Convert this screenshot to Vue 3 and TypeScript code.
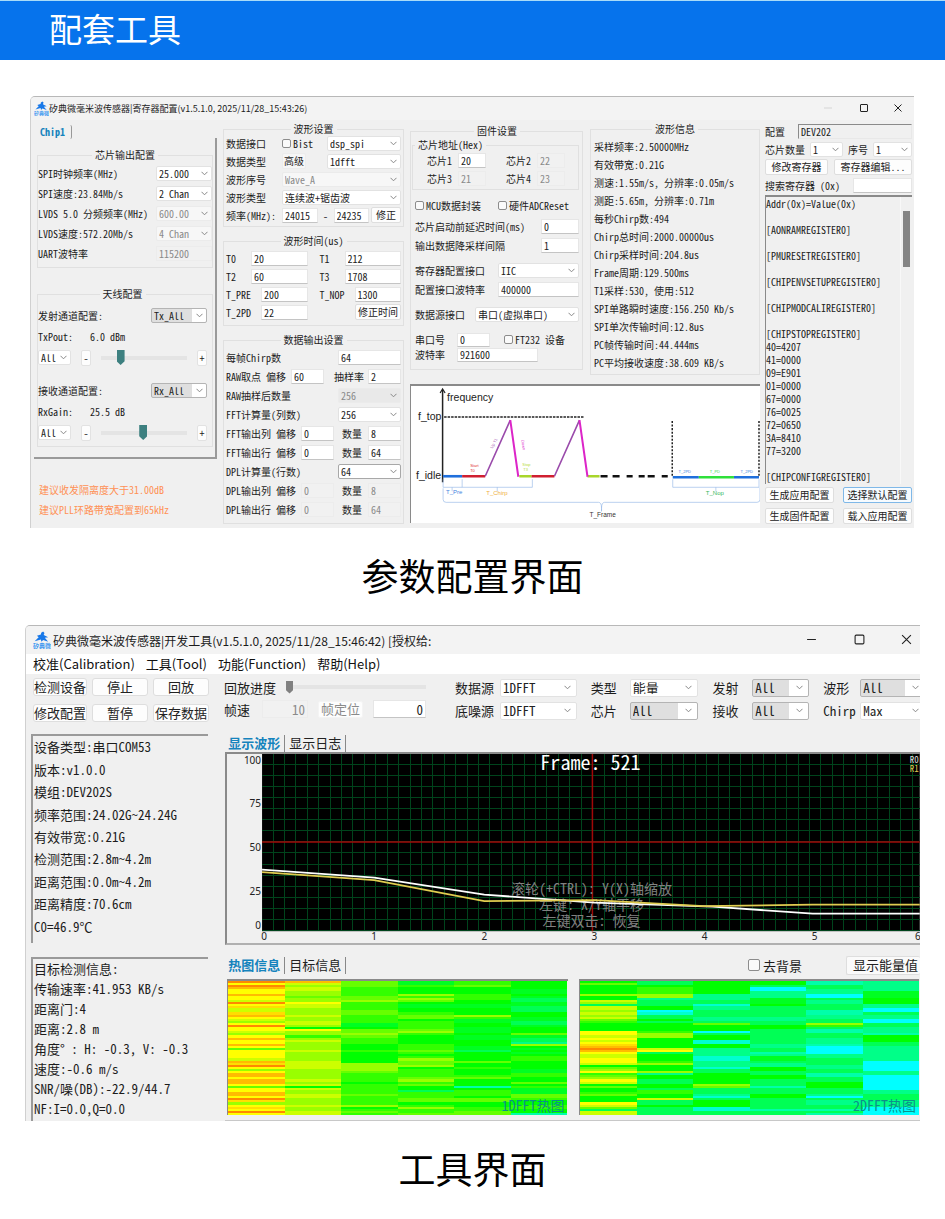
<script setup lang="ts">
import { ref } from 'vue'

interface HeatMap {
  title: string
  columns: string[]
}

const waveInfo: string[] = [
  '采样频率:2.50000MHz',
  '有效带宽:0.21G',
  '测速:1.55m/s, 分辨率:0.05m/s',
  '测距:5.65m, 分辨率:0.71m',
  '每秒Chirp数:494',
  'Chirp总时间:2000.00000us',
  'Chirp采样时间:204.8us',
  'Frame周期:129.500ms',
  'T1采样:530, 使用:512',
  'SPI单路瞬时速度:156.250 Kb/s',
  'SPI单次传输时间:12.8us',
  'PC帧传输时间:44.444ms',
  'PC平均接收速度:38.609 KB/s',
]

const registers = ref<string>(
  [
    'Addr(0x)=Value(0x)', '', '[AONRAMREGISTER0]', '', '[PMURESETREGISTER0]', '',
    '[CHIPENVSETUPREGISTER0]', '', '[CHIPMODCALIREGISTER0]', '', '[CHIPSTOPREGISTER0]',
    '40=4207', '41=0000', '09=E901', '01=0000', '67=0000', '76=0025', '72=0650',
    '3A=8410', '77=3200', '', '[CHIPCONFIGREGISTER0]',
  ].join('\n'),
)

const deviceInfo: string[] = [
  '设备类型:串口COM53', '版本:v1.0.0', '模组:DEV202S', '频率范围:24.02G~24.24G',
  '有效带宽:0.21G', '检测范围:2.8m~4.2m', '距离范围:0.0m~4.2m', '距离精度:70.6cm', 'C0=46.9℃',
]

const targetInfo: string[] = [
  '目标检测信息:', '传输速率:41.953 KB/s', '距离门:4', '距离:2.8 m',
  '角度° : H: -0.3, V: -0.3', '速度:-0.6 m/s', 'SNR/噪(DB):-22.9/44.7', 'NF:I=0.0,Q=0.0',
]

const txPower = ref<number>(20)
const rxGain = ref<number>(49)
const replay = ref<number>(0)

const gridX = Array.from({ length: 58 }, (_, i) => 274 + i * 11.4)
const gridY = Array.from({ length: 16 }, (_, i) => 763 + i * 11.1)
const yAxis = [
  { t: '100', y: 763 }, { t: '75', y: 806 }, { t: '50', y: 850 }, { t: '25', y: 894 }, { t: '0', y: 928 },
]
const xAxis = [0, 1, 2, 3, 4, 5, 6].map((n) => ({ t: String(n), x: n === 0 ? 265 : 265 + n * 110 - (n === 6 ? 7 : 0) }))

/* one letter per intensity level, hottest first */
const levels: Record<string, string> = {
  o: '#ff8800', a: '#ffbb00', g: '#ffdd00', y: '#ffff00', l: '#ccff00', m: '#99ff00',
  n: '#66ff00', p: '#33ff00', q: '#00ff00', r: '#00ff22', s: '#00ff55', t: '#00ff88',
  u: '#00ffaa', v: '#00ffd0', c: '#00ffff',
}

const heatMaps: HeatMap[] = [
  {
    title: '1DFFT热图',
    columns: [
      'oyoayyayyloygllgaylmyoyylmyayyaynyyyylagoymyaayaaynyyaayogmygyoy',
      'almllmmnmmyllmmmlmmllmqymmpmlmmmmlmmmmllllmmmmmlmlqlmmllmmmlmmll',
      'nnnppppnnmppppnnpppprrqnnmnpppqqqpqqqqqmmmmnppppqpppppnppppmqpnp',
      'rrpqqqmpmnqrrqqpnnqppppnmpqqqqpppnpqpmnnmqppppnmpnqqspppnnqpmppn',
      'ppnqqqpppqqrrqqqmprrqqrrrqrrqqqrrsqqqqnqqpqqqpnqqquqpppqnnqqppnn',
      'qqqqrrqrssrrsssqqrrssrqqqnrsstmqrqrqppqqqqrrppqqnqprrrnnpqqppqqu',
    ],
  },
  {
    title: '2DFFT热图',
    columns: [
      'qnqqqqmqqlmsllmlmlnpqqqqyylylygaoayllyylqnmypnmylqnqqpnqqqylnsll',
      'ssqpppmmtsssqqcvssqsqqqqpmmqqqqqlysqqqpmqqqmtqqssqqsppqqlssqssss',
      'qqqqqqtttssvttsssttsnqqqcsqqvvqqttttvvtttvssqqqqqmnssstvsqqqvvss',
      'qqscctttrrrqsssssttssqqsssssssttssutrrsttqqssqqsssusssqqsssssuss',
      'uussttccsttsssuuttssmpsuusstttuccccttsssttssuussqqqssstcsttssusu',
      'tttttrrrqqqttccsttccsstttuqqqsstttttttcccccttcccccccttssstttcccc',
    ],
  },
]
</script>

<template>
  <div class="page">
    <header class="banner"><h1>配套工具</h1></header>

    <section class="window config" aria-label="寄存器配置">
      <div class="titlebar">
        <svg class="logo" viewBox="0 0 16 16" aria-hidden="true">
          <path d="M1.500 9 5 5.500 3.500 4.200 7 3.200l.3-1.700L9 .500l1.200 1.200L9.500 3.500 13.500 5.500 10.500 6l3 3.500L9 8 7.500 9.500 7 7.500z" fill="#1878e8" />
          <text x="0" y="15" font-size="5.300" font-weight="700" fill="#3f98f0">矽典微</text>
        </svg>
        <span class="title">矽典微毫米波传感器|寄存器配置(v1.5.1.0, 2025/11/28_15:43:26)</span>
        <button class="winbtn faint" aria-label="最小化"><svg viewBox="0 0 10 10"><path d="M1 5h8" /></svg></button>
        <button class="winbtn" aria-label="最大化"><svg viewBox="0 0 10 10"><rect x="1.500" y="1.500" width="7" height="7" rx="0.500" /></svg></button>
        <button class="winbtn" aria-label="关闭"><svg viewBox="0 0 10 10"><path d="M1.500 1.500l7 7M8.500 1.500l-7 7" /></svg></button>
      </div>

      <div class="body">
        <div class="col-a">
          <div class="chip-tab"><button class="tab active">Chip1</button></div>
          <div class="chip-panel">
            <fieldset class="rows20">
              <legend>芯片输出配置</legend>
              <label class="row">SPI时钟频率(MHz)<select class="w56"><option>25.000</option></select></label>
              <label class="row">SPI速度:23.84Mb/s<select class="w56"><option>2 Chan</option></select></label>
              <label class="row">LVDS 5.0 分频频率(MHz)<select class="w56" disabled><option>600.00</option></select></label>
              <label class="row">LVDS速度:572.20Mb/s<select class="w56" disabled><option>4 Chan</option></select></label>
              <label class="row">UART波特率<input class="w56" value="115200" disabled /></label>
            </fieldset>
            <fieldset class="rows21 antenna">
              <legend>天线配置</legend>
              <label class="row">发射通道配置:<select class="w56 picked"><option>Tx_All</option></select></label>
              <div class="row"><span class="w52">TxPout:</span><output>6.0 dBm</output></div>
              <div class="row gain">
                <select class="w33" aria-label="发射通道"><option>All</option></select>
                <button class="step" aria-label="减小发射功率">-</button>
                <input v-model.number="txPower" type="range" class="teal" aria-label="TxPout" />
                <button class="step" aria-label="增大发射功率">+</button>
              </div>
              <label class="row gap12">接收通道配置:<select class="w56 picked"><option>Rx_All</option></select></label>
              <div class="row"><span class="w52">RxGain:</span><output>25.5 dB</output></div>
              <div class="row gain">
                <select class="w33" aria-label="接收通道"><option>All</option></select>
                <button class="step" aria-label="减小接收增益">-</button>
                <input v-model.number="rxGain" type="range" class="teal" aria-label="RxGain" />
                <button class="step" aria-label="增大接收增益">+</button>
              </div>
            </fieldset>
          </div>
          <p class="hint">建议收发隔离度大于31.00dB<br />建议PLL环路带宽配置到65kHz</p>
        </div>

        <div class="col-b">
          <fieldset class="rows18 tight">
            <legend>波形设置</legend>
            <div class="row">
              <span class="w56">数据接口</span>
              <label class="check bist"><input type="checkbox" />Bist</label>
              <select class="w74" aria-label="数据接口"><option>dsp_spi</option></select>
            </div>
            <div class="row">
              <span class="w56">数据类型</span><button class="flat">高级</button>
              <select class="w74" aria-label="数据类型"><option>1dfft</option></select>
            </div>
            <label class="row"><span class="w56">波形序号</span><select class="grow" disabled><option>Wave_A</option></select></label>
            <label class="row"><span class="w56">波形类型</span><select class="grow"><option>连续波+锯齿波</option></select></label>
            <div class="row">
              <span class="w56">频率(MHz):</span><input class="grow" value="24015" aria-label="起始频率" /><span class="dash">-</span><input class="grow" value="24235" aria-label="终止频率" /><button class="fix">修正</button>
            </div>
          </fieldset>
          <fieldset class="rows18">
            <legend>波形时间(us)</legend>
            <div class="row pair">
              <label><span class="w25">T0</span><input class="grow" value="20" /></label>
              <label><span class="w25">T1</span><input class="grow" value="212" /></label>
            </div>
            <div class="row pair">
              <label><span class="w25">T2</span><input class="grow" value="60" /></label>
              <label><span class="w25">T3</span><input class="grow" value="1708" /></label>
            </div>
            <div class="row pair">
              <label><span class="w35">T_PRE</span><input class="grow" value="200" /></label>
              <label><span class="w35">T_NOP</span><input class="grow" value="1300" /></label>
            </div>
            <div class="row pair">
              <label><span class="w35">T_2PD</span><input class="grow" value="22" /></label>
              <div class="half"><button class="time">修正时间</button></div>
            </div>
          </fieldset>
          <fieldset class="rows19">
            <legend>数据输出设置</legend>
            <label class="row">每帧Chirp数<input class="w63" value="64" /></label>
            <div class="row">
              <label class="grow between">RAW取点 偏移<input class="w33" value="60" /></label>
              <label class="count">抽样率<input class="w33" value="2" /></label>
            </div>
            <label class="row">RAW抽样后数量<select class="w63 off" disabled><option>256</option></select></label>
            <label class="row">FFT计算量(列数)<select class="w63"><option>256</option></select></label>
            <div class="row">
              <label class="offset">FFT输出列 偏移<input class="w33" value="0" /></label>
              <label class="count">数量<input class="w33" value="8" /></label>
            </div>
            <div class="row">
              <label class="offset">FFT输出行 偏移<input class="w33" value="0" /></label>
              <label class="count">数量<input class="w33" value="64" /></label>
            </div>
            <label class="row">DPL计算量(行数)<select class="w63 edged"><option>64</option></select></label>
            <div class="row">
              <label class="offset">DPL输出列 偏移<input class="w33" value="0" disabled /></label>
              <label class="count">数量<input class="w33" value="8" disabled /></label>
            </div>
            <div class="row">
              <label class="offset">DPL输出行 偏移<input class="w33" value="0" disabled /></label>
              <label class="count">数量<input class="w33" value="64" disabled /></label>
            </div>
          </fieldset>
        </div>

        <div class="col-c">
          <div class="upper">
            <fieldset class="firmware rows19">
              <legend>固件设置</legend>
              <fieldset class="address rows18">
                <legend>芯片地址(Hex)</legend>
                <div class="row chips">
                  <label>芯片1<input class="w28" value="20" /></label>
                  <label>芯片2<input class="w28" value="22" disabled /></label>
                </div>
                <div class="row chips">
                  <label>芯片3<input class="w28" value="21" disabled /></label>
                  <label>芯片4<input class="w28" value="23" disabled /></label>
                </div>
              </fieldset>
              <div class="row gap6">
                <label class="check"><input type="checkbox" />MCU数据封装</label>
                <label class="check right"><input type="checkbox" />硬件ADCReset</label>
              </div>
              <label class="row gap2">芯片启动前延迟时间(ms)<input class="w38" value="0" /></label>
              <label class="row">输出数据降采样间隔<input class="w38" value="1" /></label>
              <label class="row gap6">寄存器配置接口<select class="w81"><option>IIC</option></select></label>
              <label class="row">配置接口波特率<input class="w81" value="400000" /></label>
              <label class="row gap6">数据源接口<select class="w104"><option>串口(虚拟串口)</option></select></label>
              <div class="row low gap8">
                <label class="port"><span>串口号</span><input class="w33" value="0" /></label>
                <label class="check"><input type="checkbox" />FT232 设备</label>
              </div>
              <label class="row low port"><span>波特率</span><input class="w81" value="921600" /></label>
            </fieldset>
            <fieldset class="info rows18">
              <legend>波形信息</legend>
              <div v-for="line in waveInfo" :key="line" class="row">{{ line }}</div>
            </fieldset>
          </div>
          <div class="figure">
            <svg viewBox="3 6 348 137" role="img" aria-label="frequency">
              <g fill="none">
                <path d="M34.500 102V10" stroke="#222" stroke-width="1.500" />
                <path d="M32 13l2.500-4 2.500 4" stroke="#222" stroke-width="1.200" />
                <path d="M36 37h139" stroke="#222" stroke-width="1.500" stroke-dasharray="2.500 1" />
                <path d="M263.500 41v56M350 41v56" stroke="#222" stroke-width="1.500" stroke-dasharray="2 1.500" />
                <g stroke-width="2.600">
                  <path d="M35 96h19" stroke="#1f6fdc" />
                  <path d="M54 96h23M123 96h23" stroke="#d01f30" />
                  <path d="M111 96h12M179 96h12" stroke="#a8d62a" />
                  <path d="M192 96h7M204 96h7M218 96h6M230 96h6M239 96h7M253 96h6" stroke="#111" />
                  <path d="M264 97h26M325 97h25" stroke="#1f6fdc" />
                  <path d="M290 97h35" stroke="#2fe03a" />
                </g>
                <path d="M77 96l25-56M146 96l25-56" stroke="#9a4bab" stroke-width="1.600" />
                <path d="M102 40l8 56.500M171 40l8 56.500" stroke="#dc25c8" stroke-width="2" />
                <g stroke="#8fb4e6" stroke-width="0.600">
                  <path d="M35 99v8h19v-8M44 107v4M54 107h70v-8M89 107v4" />
                  <path d="M264 99v8h86v-8M307 107v4" />
                  <path d="M35 108v11q0 3 3 3h152q3 0 3 6v3M193 131v-3q0-6 3-6h152q3 0 3-3v-12" />
                </g>
              </g>
              <g font-size="10.500" fill="#222">
                <text x="39" y="21">frequency</text>
                <text x="10" y="40">f_top</text>
                <text x="8" y="99">f_idle</text>
              </g>
              <g font-size="6">
                <text x="38" y="114" fill="#3f82e0">T_Pre</text>
                <text x="78" y="115" fill="#f0b040">T_Chirp</text>
                <text x="297" y="115" fill="#36b85a">T_Nop</text>
                <text x="181" y="137" fill="#333" font-size="6.500">T_Frame</text>
              </g>
              <g font-size="4">
                <text x="62" y="87" fill="#e03030">Start</text><text x="62" y="92" fill="#e03030">T0</text>
                <text x="114" y="86" fill="#b5dc3c">Stop</text><text x="115" y="91" fill="#b5dc3c">T3</text>
                <text x="81" y="67" fill="#a860b8" transform="rotate(-62 84 65)">Up T1</text>
                <text x="113" y="60" fill="#e040d0" transform="rotate(82 113 60)">Down</text>
                <text x="276" y="93" text-anchor="middle" fill="#3f82e0">T_2PD</text>
                <text x="306" y="93" text-anchor="middle" fill="#40d850">T_PD</text>
                <text x="344" y="93" text-anchor="end" fill="#3f82e0">T_2PD</text>
              </g>
            </svg>
          </div>
        </div>

        <div class="col-d">
          <label class="row">配置<input class="grow sunken" value="DEV202" /></label>
          <div class="row four">
            <label for="chip-count">芯片数量</label><select id="chip-count"><option>1</option></select>
            <label for="chip-no">序号</label><select id="chip-no"><option>1</option></select>
          </div>
          <div class="row two"><button>修改寄存器</button><button>寄存器编辑...</button></div>
          <label class="row">搜索寄存器 (0x)<input class="w64" value="" /></label>
          <div class="reglist">
            <textarea v-model="registers" aria-label="寄存器列表" readonly></textarea>
            <div class="track"><div class="thumb"></div></div>
          </div>
          <div class="row final two"><button>生成应用配置</button><button class="focus">选择默认配置</button></div>
          <div class="row final two"><button>生成固件配置</button><button>载入应用配置</button></div>
        </div>
      </div>
    </section>

    <p class="caption">参数配置界面</p>

    <section class="window dev" aria-label="开发工具">
      <div class="titlebar">
        <svg class="logo" viewBox="0 0 16 16" aria-hidden="true">
          <path d="M1.500 9 5 5.500 3.500 4.200 7 3.200l.3-1.700L9 .500l1.200 1.200L9.500 3.500 13.500 5.500 10.500 6l3 3.500L9 8 7.500 9.500 7 7.500z" fill="#1878e8" />
          <text x="0" y="15" font-size="5.300" font-weight="700" fill="#3f98f0">矽典微</text>
        </svg>
        <span class="title">矽典微毫米波传感器|开发工具(v1.5.1.0, 2025/11/28_15:46:42) [授权给:</span>
        <button class="winbtn min" aria-label="最小化"><svg viewBox="0 0 10 10"><path d="M1 5h8" /></svg></button>
        <button class="winbtn max" aria-label="最大化"><svg viewBox="0 0 10 10"><rect x="1" y="1" width="8" height="8" rx="1" /></svg></button>
        <button class="winbtn close" aria-label="关闭"><svg viewBox="0 0 10 10"><path d="M1 1l8 8M9 1l-8 8" /></svg></button>
      </div>
      <nav class="menu">
        <a href="#">校准(Calibration)</a><a href="#">工具(Tool)</a><a href="#">功能(Function)</a><a href="#">帮助(Help)</a>
      </nav>

      <div class="tools">
        <div class="actions">
          <button>检测设备</button><button>停止</button><button>回放</button>
          <button>修改配置</button><button>暂停</button><button>保存数据</button>
        </div>
        <div class="replay">
          <label class="line">回放进度<input v-model.number="replay" type="range" class="gray" /></label>
          <div class="line">
            <label class="speed">帧速<input value="10" disabled /></label>
            <button class="locate" disabled>帧定位</button>
            <input class="frame-no" value="0" aria-label="帧定位" />
          </div>
        </div>
        <div class="sources">
          <label for="s1">数据源</label><select id="s1"><option>1DFFT</option></select>
          <label for="s2">类型</label><select id="s2"><option>能量</option></select>
          <label for="s3">发射</label><select id="s3" class="picked"><option>All</option></select>
          <label for="s4">波形</label><select id="s4" class="picked"><option>All</option></select>
          <label for="s5">底噪源</label><select id="s5"><option>1DFFT</option></select>
          <label for="s6">芯片</label><select id="s6" class="picked"><option>All</option></select>
          <label for="s7">接收</label><select id="s7" class="picked"><option>All</option></select>
          <label for="s8">Chirp</label><select id="s8"><option>Max</option></select>
        </div>
      </div>

      <div class="main">
        <div class="side">
          <div class="device"><div v-for="line in deviceInfo" :key="line">{{ line }}</div></div>
          <div class="target"><div v-for="line in targetInfo" :key="line">{{ line }}</div></div>
        </div>
        <div class="views">
          <div class="tabs"><button class="tab active">显示波形</button><button class="tab">显示日志</button></div>
          <div class="chart">
            <svg viewBox="228 753 692 189" role="img" aria-label="Frame: 521">
              <rect x="263" y="753" width="657" height="177" fill="#000" />
              <g stroke="#00441c" stroke-width="1" shape-rendering="crispEdges">
                <line v-for="x in gridX" :key="'x' + x" :x1="x" :x2="x" y1="753" y2="930" />
                <line v-for="y in gridY" :key="'y' + y" x1="263" x2="920" :y1="y" :y2="y" />
              </g>
              <path d="M593 753v177M263 841h657" stroke="#a00808" stroke-width="1.500" fill="none" />
              <g class="mono" fill="#808080" font-size="14" text-anchor="middle">
                <text x="592" y="893">滚轮(+CTRL): Y(X)轴缩放</text>
                <text x="592" y="909">左键: X/Y轴平移</text>
                <text x="592" y="925">左键双击: 恢复</text>
              </g>
              <g fill="none" stroke-width="1.800">
                <path d="M263 868.500 375 876.500 485 893.500 595 901.500 713 905.500 813 912.500H920" stroke="#fff" />
                <path d="M263 871 375 879 485 900 595 899 704 905 813 903.500H920" stroke="#e0cc50" />
              </g>
              <text class="mono" x="591" y="769" font-size="20" text-anchor="middle" fill="#fff">Frame: 521</text>
              <g class="mono" font-size="9"><text x="910" y="762" fill="#ddd">R0</text><text x="910" y="771" fill="#d8c850">R1</text></g>
              <g class="axis" font-size="10" fill="#222">
                <text v-for="a in yAxis" :key="a.t" x="262" :y="a.y" text-anchor="end">{{ a.t }}</text>
                <text v-for="a in xAxis" :key="a.t" :x="a.x" y="939" text-anchor="middle">{{ a.t }}</text>
              </g>
            </svg>
          </div>
          <div class="tabs heat-tabs">
            <button class="tab active">热图信息</button><button class="tab">目标信息</button>
            <label class="check bg"><input type="checkbox" />去背景</label>
            <button class="energy">显示能量值</button>
          </div>
          <div class="heats">
            <div v-for="map in heatMaps" :key="map.title" class="heat">
              <svg viewBox="0 0 6 64" preserveAspectRatio="none" shape-rendering="crispEdges" aria-hidden="true">
                <g v-for="(col, c) in map.columns" :key="c">
                  <rect v-for="(ch, r) in col.split('')" :key="r" :x="c" :y="r" width="1" height="1" :fill="levels[ch]" />
                </g>
              </svg>
              <span>{{ map.title }}</span>
            </div>
          </div>
        </div>
      </div>
    </section>

    <p class="caption">工具界面</p>
  </div>
</template>

<style>
body {
  background: #fff;
}
</style>

<style scoped>
.page {
  font-family: "Noto Sans Mono CJK SC", "Noto Sans CJK SC", sans-serif;
  color: #1c1c1c;
  overflow: hidden;
}
.page * {
  box-sizing: border-box;
}
.banner {
  height: 60px;
  padding-left: 49px;
  background: #0673ec;
  border-top: 1px solid #a8dcf8;
}
h1 {
  margin: 0;
  font: 400 33px/55px "Noto Sans CJK SC", sans-serif;
  color: #fff;
}
.caption {
  margin: 0;
  height: 97px;
  font: 400 37px/94px "Noto Sans CJK SC", sans-serif;
  color: #000;
  text-align: center;
}
.window {
  background: #f0f0f0;
  border-top: 1px solid #b8b8b8;
  border-left: 1px solid #d0d0d0;
  border-top-left-radius: 5px;
  overflow: hidden;
}
.config {
  margin: 36px 31px 0 30px;
  font-size: 10px;
}
.dev {
  margin: 0 25px;
  font-size: 13px;
}
.titlebar {
  display: flex;
  align-items: center;
  background: #f3f3f3;
  font-family: "Noto Sans CJK SC", sans-serif;
}
.config .titlebar {
  height: 23px;
  padding-left: 3px;
}
.dev .titlebar {
  height: 28px;
  padding-left: 7px;
}
.logo {
  width: 15px;
  height: 15px;
}
.dev .logo {
  width: 18px;
  height: 18px;
  margin-right: 2px;
}
.title {
  flex: 1;
  white-space: nowrap;
}
.config .title {
  font-size: 9px;
}
.dev .title {
  font-size: 12px;
}
.winbtn {
  width: 36px;
  height: 100%;
  padding: 0;
  border: 0;
  background: none;
}
.winbtn:last-child {
  width: 32px;
}
.winbtn svg {
  width: 10px;
  height: 10px;
  fill: none;
  stroke: #222;
  stroke-width: 1;
}
.dev .winbtn svg {
  width: 11px;
  height: 11px;
}
.dev .min {
  width: 30px;
}
.dev .max {
  width: 66px;
}
.dev .close {
  width: 28px;
}
.winbtn.faint svg {
  stroke: #d5d5d5;
}

/* shared controls */
input,
select,
button,
textarea {
  margin: 0;
  font: inherit;
  color: #222;
  border-radius: 0;
}
label,
span,
button,
.row {
  white-space: nowrap;
}
input:not([type]),
select {
  min-width: 0;
  height: 15px;
  padding: 0 2px;
  border: 1px solid #e6e6e6;
  border-bottom-color: #c4c4c4;
  background: #fff;
  line-height: 13px;
}
select {
  appearance: none;
  border-color: #e2e2e2;
  border-radius: 2px;
  background: #fff url("data:image/svg+xml,%3Csvg xmlns='http://www.w3.org/2000/svg' width='7' height='5'%3E%3Cpath d='M.5 .8l3 3 3-3' fill='none' stroke='%23888'/%3E%3C/svg%3E") no-repeat right 3px center;
}
select:disabled,
input:disabled {
  color: #8a8a8a;
  opacity: 1;
}
input:not([type]):disabled {
  background: #f1f1f1;
  border-color: #ececec;
}
select:disabled {
  background-color: #f7f7f7;
  border-color: #ebebeb;
}
select.picked {
  border-color: #b4b4b4;
  background:
    url("data:image/svg+xml,%3Csvg xmlns='http://www.w3.org/2000/svg' width='7' height='5'%3E%3Cpath d='M.5 .8l3 3 3-3' fill='none' stroke='%23888'/%3E%3C/svg%3E") no-repeat right 3px center,
    linear-gradient(to left, #fff 14px, #dfdfdf 14px);
}
select.off {
  background-color: #e9e9e9;
}
select.edged {
  border-color: #a8a8a8;
}
button {
  height: 16px;
  padding: 0;
  border: 1px solid #dedede;
  border-radius: 2px;
  background: #fdfdfd;
  line-height: 14px;
}
.check {
  display: flex;
  align-items: center;
  gap: 2px;
}
.check input {
  appearance: none;
  width: 9px;
  height: 9px;
  border: 1px solid #8c8c8c;
  border-radius: 2px;
  background: #fafafa;
}
.tab {
  border: 0;
  background: none;
}
.tab.active {
  color: #1583bd;
  font-weight: 700;
}

/* register window */
.body {
  display: grid;
  grid-template-columns: 186fr 181fr 350fr 148fr;
  gap: 6px;
  padding-bottom: 2px;
}
.body > div {
  min-width: 0;
}
fieldset {
  min-width: 0;
  margin: 0;
  padding: 3px 2px 4px;
  border: 1px solid #e0e0e0;
}
legend {
  margin: 0 auto;
  padding: 0 3px;
  line-height: 10px;
}
.row {
  display: flex;
  align-items: center;
  justify-content: space-between;
  height: 18px;
}
.rows19 > .row {
  height: 19px;
}
.rows20 > .row {
  height: 20px;
}
.rows21 > .row {
  height: 21px;
}
.rows19 > .row.low {
  height: 15px;
}
.row.gap2 {
  margin-top: 2px;
}
.row.gap6 {
  margin-top: 6px;
}
.row.gap8 {
  margin-top: 8px;
}
.row.gap12 {
  margin-top: 12px;
}
.grow {
  flex: 1;
}
.w25 { width: 25px; }
.w28 { width: 28px; }
.w33 { width: 33px; }
.w35 { width: 35px; }
.w38 { width: 38px; }
.w52 { width: 52px; }
.w56 { width: 56px; }
.w63 { width: 63px; }
.w64 { width: 65px; }
.w74 { width: 74px; }
.w81 { width: 81px; }
.w104 { width: 104px; }

.chip-tab {
  height: 18px;
  padding: 4px 0 0 7px;
}
.chip-tab .tab {
  height: 14px;
  padding: 0 6px 0 2px;
  border-right: 1px solid #999;
}
.chip-panel {
  margin-left: 3px;
  padding: 12px 2px 10px 3px;
  border-right: 2px solid #9a9a9a;
  border-bottom: 2px solid #9a9a9a;
}
.chip-panel fieldset {
  padding-left: 0;
  padding-right: 0;
}
.chip-panel .antenna {
  margin-top: 21px;
  padding: 6px 5px 3px 0;
}
.antenna .row output {
  flex: 1;
}
.row.gain {
  gap: 10px;
}
.step {
  width: 10px;
  border-color: #e2e2e2;
}
input[type="range"] {
  appearance: none;
  flex: 1;
  min-width: 0;
  height: 16px;
  background: linear-gradient(#e4e4e4, #e4e4e4) no-repeat center / 100% 4px;
}
input[type="range"]::-webkit-slider-thumb {
  appearance: none;
  width: 8px;
  height: 15px;
  background: #3d8080;
  clip-path: polygon(0 0, 100% 0, 100% 75%, 50% 100%, 0 75%);
}
input.gray::-webkit-slider-thumb {
  width: 7px;
  height: 13px;
  background: #808080;
}
.hint {
  margin: 21px 0 0 8px;
  line-height: 20px;
  color: #ff9055;
  white-space: nowrap;
}

.col-b {
  display: flex;
  flex-direction: column;
  gap: 9px;
  padding-top: 4px;
}
.col-b .tight {
  padding: 0 2px 2px;
}
.check.bist {
  margin-right: auto;
}
.flat {
  margin-right: auto;
  padding: 0 1px;
  background: #f6f6f6;
  border-color: #ececec;
}
.dash {
  width: 16px;
  text-align: center;
}
.fix {
  width: 30px;
  margin-left: 2px;
}
.pair {
  gap: 12px;
}
.pair > * {
  display: flex;
  flex: 1;
  align-items: center;
  min-width: 0;
}
.pair .time {
  width: 46px;
  margin-left: auto;
}
.between,
.offset,
.count {
  display: flex;
  align-items: center;
  justify-content: space-between;
}
.offset {
  flex: 1;
  margin-right: 8px;
}
.between {
  margin-right: 10px;
}
.count {
  gap: 4px;
}
.offset + .count {
  width: 59px;
}

.col-c {
  padding-top: 4px;
}
.upper {
  display: grid;
  grid-template-columns: 173fr 170fr;
  gap: 7px;
}
.firmware {
  margin-top: 2px;
  align-self: start;
  padding: 4px 3px 7px 4px;
}
.address {
  margin-left: -3px;
  padding: 1px 0 2px;
}
.address legend {
  margin: 0 0 0 2px;
}
.chips {
  justify-content: flex-start;
  gap: 20px;
  padding-left: 14px;
}
.chips label {
  display: flex;
  align-items: center;
  gap: 6px;
}
.right {
  margin-right: 10px;
}
.port {
  display: flex;
  align-items: center;
  justify-content: flex-start;
}
.port span {
  width: 42px;
}
.port + .check {
  margin-right: 14px;
}
.low input:not([type]) {
  height: 14px;
}
.info {
  align-self: start;
  padding: 3px 3px 3px;
}
.figure {
  margin-top: 9px;
  border-top: 2px solid #8a8a8a;
  border-left: 1px solid #8a8a8a;
  background: #fff;
}
.figure svg {
  display: block;
  width: 100%;
  font-family: "Liberation Sans", Arial, sans-serif;
}

.col-d {
  display: flex;
  flex-direction: column;
  margin-left: -1px;
  padding: 2px 2px 0 0;
}
.col-d > label.row {
  gap: 13px;
}
.col-d .sunken {
  background: #f0f0f0;
  border-color: #8a8a8a #e8e8e8 #e8e8e8 #8a8a8a;
}
.four {
  gap: 5px;
}
.four select {
  flex: 1;
}
.four select:last-child {
  flex: 1 0 12px;
}
.two {
  gap: 6px;
}
.two button {
  flex: 1 1 auto;
}
.reglist {
  display: flex;
  flex: 1;
  min-height: 289px;
  margin-top: 1px;
  border-top: 2px solid #8a8a8a;
  border-left: 1px solid #8a8a8a;
}
.reglist textarea {
  flex: 1;
  min-width: 0;
  padding: 0;
  border: 0;
  background: #f0f0f0;
  line-height: 13px;
  resize: none;
  overflow: hidden;
  white-space: pre;
}
.track {
  width: 12px;
  padding: 14px 2px 0;
  border-left: 1px solid #f8f8f8;
}
.thumb {
  height: 56px;
  background: #858585;
}
.row.final {
  height: 21px;
  gap: 9px;
}
.focus {
  border-color: #7fb8e8;
  background: #f6fbff;
}

/* development tool window */
.menu {
  display: flex;
  gap: 11px;
  padding-left: 7px;
  background: #fff;
  font: 13px/20px "Noto Sans CJK SC", sans-serif;
}
.menu a {
  color: #111;
  text-decoration: none;
}
.tools {
  display: grid;
  grid-template-columns: 176fr 202fr 484fr;
  column-gap: 15px;
  height: 60px;
  padding: 0 0 0 7px;
  margin-right: -5px;
}
.tools > * {
  min-width: 0;
}
.tools input:not([type]),
.tools select {
  height: 18px;
}
.actions {
  display: grid;
  grid-template-columns: 54fr 56fr 56fr;
  grid-auto-rows: 26px;
  column-gap: 5px;
  align-items: center;
}
.actions button {
  height: 18px;
  line-height: 16px;
  border-radius: 3px;
}
.replay {
  padding-top: 2px;
}
.line {
  display: flex;
  align-items: center;
  height: 22px;
  gap: 10px;
}
.speed {
  display: flex;
  align-items: center;
  gap: 12px;
}
.speed input {
  width: 46px;
  text-align: right;
}
.locate {
  height: 17px;
  padding: 0 2px;
  border-color: #f4f4f4;
  color: #8a8a8a;
}
.frame-no {
  flex: 1;
  text-align: right;
}
.sources {
  display: grid;
  grid-template-columns: 45fr 77fr 53fr 69fr 54fr 57fr 51fr 65fr;
  grid-auto-rows: 23px;
  align-items: center;
  align-content: start;
  padding: 2px 0 0 14px;
}
.sources select:not(:nth-child(8n)) + label {
  padding-left: 14px;
}
.sources select {
  background-position: right 5px center;
}
.sources select.picked {
  background:
    url("data:image/svg+xml,%3Csvg xmlns='http://www.w3.org/2000/svg' width='7' height='5'%3E%3Cpath d='M.5 .8l3 3 3-3' fill='none' stroke='%23888'/%3E%3C/svg%3E") no-repeat right 5px center,
    linear-gradient(to left, #fff 19px, #dfdfdf 19px);
}
.main {
  display: grid;
  grid-template-columns: 177fr 694fr;
  column-gap: 17px;
  padding-left: 5px;
}
.side {
  display: grid;
  grid-template-rows: 209px 1fr;
  row-gap: 14px;
}
.side > div {
  display: flex;
  flex-direction: column;
  justify-content: space-around;
  padding: 0 0 5px 1px;
  border-top: 2px solid #9a9a9a;
  border-left: 2px solid #9a9a9a;
  white-space: nowrap;
  line-height: 18px;
}
.side .target {
  padding-bottom: 2px;
}
.views {
  min-width: 0;
}
.tabs {
  display: flex;
  align-items: center;
  height: 18px;
}
.tabs .tab {
  height: 17px;
  padding: 0 4px;
  border-right: 1px solid #888;
  border-radius: 0;
}
.tabs .active {
  padding-left: 3px;
}
.chart {
  border-top: 2px solid #8a8a8a;
  border-left: 2px solid #8a8a8a;
  border-bottom: 2px solid #b0b0b0;
}
.chart svg {
  display: block;
  width: 100%;
}
.mono {
  font-family: "Noto Sans Mono CJK SC", "Noto Sans CJK SC", sans-serif;
}
.axis {
  font-family: "Noto Sans", sans-serif;
}
.heat-tabs {
  height: 34px;
  padding-top: 6px;
}
.heat-tabs .bg {
  margin-left: auto;
  margin-right: 44px;
  gap: 3px;
}
.bg input {
  width: 12px;
  height: 12px;
}
.energy {
  height: 19px;
  padding: 0 2px 0 6px;
  border-right: 0;
  background: #fafafa;
}
.heats {
  display: grid;
  grid-template-columns: 1fr 1fr;
  column-gap: 11px;
  padding: 0 1px 5px 2px;
  border-bottom: 1px solid #c8c8c8;
}
.heat {
  display: grid;
  height: 136px;
  border-top: 2px solid #8a8a8a;
  border-left: 1px solid #8a8a8a;
}
.heat > * {
  grid-area: 1 / 1;
}
.heat svg {
  width: 100%;
  height: 134px;
}
.heat span {
  align-self: end;
  justify-self: end;
  padding-right: 3px;
  font-size: 14px;
  line-height: 20px;
  color: #0c8f8a;
}
</style>
